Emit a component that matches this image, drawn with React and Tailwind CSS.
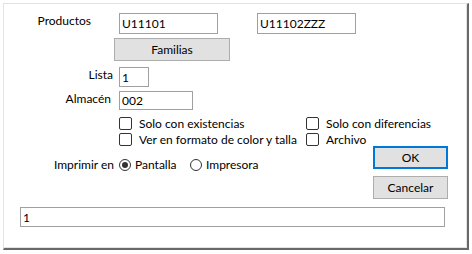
const FONT = "font-['Lato','Liberation_Sans',sans-serif] text-[12px] leading-[15px] text-black"

function TextBox({ value, className = '' }) {
  return (
    <div className={`flex items-center shrink-0 bg-white border border-[#a0a0a0] pl-[2px] ${className}`}>
      <span className="leading-[15px]">{value}</span>
    </div>
  )
}

function Button({ label, isDefault, className = '' }) {
  return (
    <div
      className={`flex items-center justify-center shrink-0 bg-[#e1e1e1] ${
        isDefault ? 'border-2 border-[#0078d7]' : 'border border-[#adadad]'
      } ${className}`}
    >
      {label}
    </div>
  )
}

function Check({ label, className = '' }) {
  return (
    <div className={`flex items-center shrink-0 h-[15px] ${className}`}>
      <span className="w-[13px] h-[13px] border border-[#333333] rounded-[2px] bg-white shrink-0" />
      <span className="ml-[7px] whitespace-nowrap">{label}</span>
    </div>
  )
}

function Radio({ label, checked, className = '' }) {
  return (
    <div className={`flex items-center shrink-0 h-[15px] ${className}`}>
      <span className="w-[12px] h-[12px] rounded-full border border-[#333333] bg-white flex items-center justify-center shrink-0">
        {checked && <span className="w-[6px] h-[6px] rounded-full bg-[#333333]" />}
      </span>
      <span className="ml-[4px] whitespace-nowrap">{label}</span>
    </div>
  )
}

export default function App() {
  return (
    <div className={`w-[472px] h-[254px] bg-white pl-[3px] pt-[3px] ${FONT}`}>
      <div className="w-[466px] h-[247px] border-t border-l border-t-[#e3e3e3] border-l-[#e3e3e3] border-r-2 border-b-2 border-r-[#696969] border-b-[#696969] shadow-[inset_-1px_-1px_0_#e3e3e3] flex flex-col">

        {/* Productos */}
        <div className="flex items-start mt-[9px]">
          <div className="w-[87px] shrink-0 text-right">Productos</div>
          <TextBox value="U11101" className="ml-[28px] w-[99px] h-[21px]" />
          <TextBox value="U11102ZZZ" className="ml-[39px] w-[99px] h-[21px]" />
        </div>

        <Button label="Familias" className="ml-[110px] mt-[4px] w-[116px] h-[23px]" />

        {/* Lista */}
        <div className="flex items-start mt-[6px]">
          <div className="w-[109px] shrink-0 text-right">Lista</div>
          <TextBox value="1" className="ml-[6px] w-[30px] h-[20px]" />
        </div>

        {/* Almacén */}
        <div className="flex items-start mt-[4px]">
          <div className="w-[107px] shrink-0 text-right">Almacén</div>
          <TextBox value="002" className="ml-[8px] w-[74px] h-[19px]" />
        </div>

        {/* Opciones + botones */}
        <div className="flex mt-[6px]">
          <div className="w-[369px] shrink-0 flex flex-col">
            <div className="flex pl-[115px]">
              <Check label="Solo con existencias" className="w-[187px]" />
              <Check label="Solo con diferencias" />
            </div>
            <div className="flex pl-[115px] mt-[1px]">
              <Check label="Ver en formato de color y talla" className="w-[187px]" />
              <Check label="Archivo" />
            </div>
            <div className="flex items-center mt-[10px]">
              <div className="w-[110px] shrink-0 text-right">Imprimir en</div>
              <Radio label="Pantalla" checked className="ml-[5px] w-[71px]" />
              <Radio label="Impresora" />
            </div>
          </div>
          <div className="flex flex-col mt-[30px]">
            <Button label="OK" isDefault className="w-[75px] h-[23px]" />
            <Button label="Cancelar" className="w-[75px] h-[23px] mt-[7px]" />
          </div>
        </div>

        <TextBox value="1" className="ml-[16px] mt-[8px] w-[425px] h-[20px]" />
      </div>
    </div>
  )
}
